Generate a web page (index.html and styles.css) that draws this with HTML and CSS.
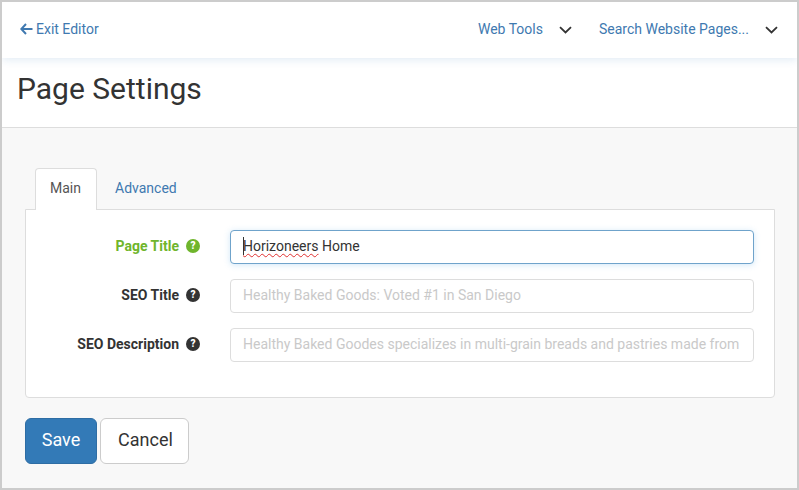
FILE: index.html
```html
<!DOCTYPE html>
<html lang="en">
<head>
<meta charset="utf-8">
<title>Page Settings</title>
<link rel="stylesheet" href="styles.css">
</head>
<body>
<div class="frame">
  <header class="topbar">
    <a class="link exit" href="#">
      <svg class="arrow" width="13" height="12" viewBox="0 0 13 12"><path d="M6 1 1.300 6 6 11M1.500 6H12.500" fill="none" stroke="currentColor" stroke-width="2"/></svg>
      <span>Exit Editor</span>
    </a>
    <div class="nav">
      <a class="link drop tools" href="#"><span>Web Tools</span>
        <svg class="chev" width="13" height="8" viewBox="0 0 13 8"><path d="M1 1.200 6.500 6.500 12 1.200" fill="none" stroke="#333" stroke-width="1.800"/></svg></a>
      <a class="link drop search" href="#"><span>Search Website Pages...</span>
        <svg class="chev" width="13" height="8" viewBox="0 0 13 8"><path d="M1 1.200 6.500 6.500 12 1.200" fill="none" stroke="#333" stroke-width="1.800"/></svg></a>
    </div>
  </header>
  <section class="titlebar"><h1>Page Settings</h1></section>
  <main class="content">
    <nav class="tabs">
      <a class="tab active" href="#">Main</a>
      <a class="tab" href="#">Advanced</a>
    </nav>
    <form class="panel">
      <div class="row ok">
        <label class="label">Page Title <span class="help">?</span></label>
        <div class="input focus"><span class="caret"></span><span class="misspelt">Horizoneers</span>&nbsp;Home</div>
      </div>
      <div class="row">
        <label class="label">SEO Title <span class="help">?</span></label>
        <input class="input" placeholder="Healthy Baked Goods: Voted #1 in San Diego">
      </div>
      <div class="row">
        <label class="label">SEO Description <span class="help">?</span></label>
        <input class="input" placeholder="Healthy Baked Goodes specializes in multi-grain breads and pastries made from">
      </div>
    </form>
    <div class="actions">
      <button class="btn primary" type="button">Save</button>
      <button class="btn cancel" type="button">Cancel</button>
    </div>
  </main>
</div>
</body>
</html>
```
FILE: styles.css
```css
* { box-sizing: border-box; }
html, body { margin: 0; height: 100%; }
body { font-family: Roboto, "Liberation Sans", sans-serif; color: #333; font-size: 14px; }
.frame {
  width: 799px; height: 490px;
  border: 2px solid #ccc;
  background: #f8f8f8;
  display: flex; flex-direction: column;
  overflow: hidden;
}
.link { color: #4079b0; text-decoration: none; font-size: 14px; line-height: 20px; }
.topbar {
  height: 56px; flex: none;
  background: #fff;
  display: flex; align-items: center; justify-content: space-between;
  padding: 0 19px 2px 18px;
  position: relative; z-index: 1;
  box-shadow: 0 2px 8px rgba(51, 122, 183, .14);
}
.exit { display: flex; align-items: center; gap: 3px; }
.arrow { display: block; }
.nav { display: flex; align-items: center; gap: 27px; }
.drop { display: flex; align-items: center; }
.tools { gap: 16px; }
.search { gap: 16px; }
.chev { display: block; margin-top: 1px; }
.titlebar {
  height: 70px; flex: none;
  background: #fff;
  border-bottom: 1px solid #ddd;
  padding: 12px 15px 0;
}
h1 { margin: 0; font-size: 30px; font-weight: 400; line-height: 38px; color: #333; }
.content { padding: 40px 22px 0 23px; flex: 1; }
.tabs { display: flex; padding-left: 10px; height: 42px; position: relative; z-index: 1; }
.tab {
  display: block; height: 42px;
  padding: 9px 15px 0;
  line-height: 20px; font-size: 14px;
  color: #4079b0; text-decoration: none;
  border: 1px solid transparent; border-bottom: 0;
  border-radius: 4px 4px 0 0;
  margin-right: 2px;
}
.tab.active { color: #555; background: #fff; border-color: #ddd; width: 62px; padding-left: 14px; }
.panel {
  height: 189px; margin-top: -1px;
  background: #fff;
  border: 1px solid #ddd; border-radius: 0 0 4px 4px;
  padding: 20px 20px 0 0;
  display: flex; flex-direction: column; gap: 15px;
}
.row { display: flex; align-items: center; height: 34px; }
.label {
  width: 174px; flex: none;
  display: flex; justify-content: flex-end; align-items: center; gap: 7px;
  font-weight: 700; color: #333; font-size: 14px;
  margin-right: 30px;
  padding-bottom: 2px;
}
.help {
  width: 14px; height: 14px; border-radius: 50%;
  background: #333; color: #fff;
  font-size: 10px; font-weight: 900; line-height: 14px; text-align: center;
}
.ok .label { color: #6fb52c; }
.ok .help { background: #6fb52c; }
.input {
  flex: 1; height: 34px; min-width: 0;
  border: 1px solid #ddd; border-radius: 4px;
  background: #fff;
  padding: 4px 12px 6px;
  font: 14px/20px Roboto, "Liberation Sans", sans-serif;
  color: #333;
  outline: 0;
}
.input::placeholder { color: #c9c9c9; opacity: 1; }
.input.focus {
  border-color: #6fa3cb;
  box-shadow: 0 1px 6px rgba(102, 175, 233, .3);
  display: flex; align-items: center;
}
.caret { width: 1px; height: 18px; background: #333; margin-right: -1px; }
.misspelt { text-decoration: underline wavy #e03030 1px; text-underline-offset: 2px; }
.actions { display: flex; gap: 3px; margin-top: 20px; }
.btn {
  height: 46px; padding: 0 0 2px;
  border: 1px solid #ccc; border-radius: 6px;
  background: #fff; color: #333;
  font: 18px/24px Roboto, "Liberation Sans", sans-serif;
}
.btn.primary { width: 72px; background: #337ab7; border-color: #2e6da4; color: #fff; }
.btn.cancel { width: 89px; padding-left: 2px; }
```
